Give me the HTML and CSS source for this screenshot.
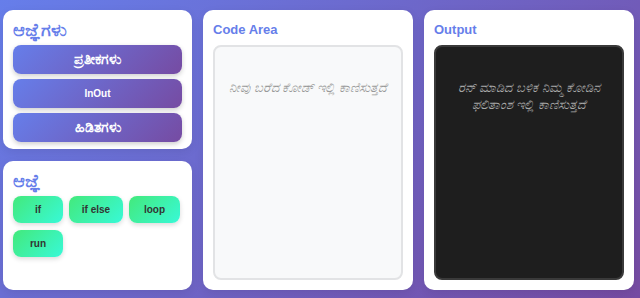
FILE: index.html
```html
<!DOCTYPE html>
<html lang="kn">
<head>
<meta charset="utf-8">
<link rel="stylesheet" href="styles.css">
</head>
<body>
<div class="app">
  <div class="sidebar">
    <section class="card card-cmds">
      <h2 class="card-title kn-title">ಆಜ್ಞೆಗಳು</h2>
      <div class="cat-list">
        <button class="cat-btn kn">ಪ್ರತೀಕಗಳು</button>
        <button class="cat-btn">InOut</button>
        <button class="cat-btn kn">ಹಿಡಿತಗಳು</button>
      </div>
    </section>
    <section class="card card-blocks">
      <h2 class="card-title kn-title">ಆಜ್ಞೆ</h2>
      <div class="block-list">
        <button class="block-btn">if</button>
        <button class="block-btn">if else</button>
        <button class="block-btn">loop</button>
        <button class="block-btn">run</button>
      </div>
    </section>
  </div>
  <section class="card panel">
    <h2 class="card-title">Code Area</h2>
    <div class="code-box">
      <p class="placeholder">ನೀವು ಬರೆದ ಕೋಡ್ ಇಲ್ಲಿ ಕಾಣಿಸುತ್ತದೆ</p>
    </div>
  </section>
  <section class="card panel">
    <h2 class="card-title">Output</h2>
    <div class="output-box">
      <p class="placeholder dark">ರನ್ ಮಾಡಿದ ಬಳಿಕ ನಿಮ್ಮ ಕೋಡಿನ ಫಲಿತಾಂಶ ಇಲ್ಲಿ ಕಾಣಿಸುತ್ತದೆ</p>
    </div>
  </section>
</div>
</body>
</html>
```
FILE: styles.css
```css
* { box-sizing: border-box; }
html, body { margin: 0; height: 100%; }
body {
  font-family: "Liberation Sans", "Noto Sans", sans-serif;
  background: linear-gradient(135deg, #667eea 0%, #764ba2 100%);
  overflow: hidden;
}
.app {
  display: grid;
  grid-template-columns: 189px 210px 210px;
  column-gap: 11px;
  padding: 10px 6px 8px 3px;
  height: 298px;
}
.sidebar {
  display: flex;
  flex-direction: column;
  gap: 12px;
}
.card {
  background: #fff;
  border-radius: 10px;
  padding: 10px;
  box-shadow: 0 3px 10px rgba(0,0,0,0.08);
}
.card-cmds { height: 139px; }
.card-blocks { flex: 1; }
.card-title {
  margin: 0 0 5px;
  height: 20px;
  font-size: 13px;
  font-weight: bold;
  color: #667eea;
  line-height: 20px;
  white-space: nowrap;
}
.kn-title { font-size: 18px; }
.cat-list { display: flex; flex-direction: column; gap: 5px; }
.cat-btn {
  height: 29px;
  border: none;
  border-radius: 8px;
  background: linear-gradient(135deg, #667eea 0%, #764ba2 100%);
  color: #fff;
  font-family: inherit;
  font-size: 10px;
  font-weight: bold;
  line-height: 29px;
  padding: 0;
  box-shadow: 0 2px 5px rgba(0,0,0,0.2);
}
.cat-btn.kn { font-size: 14px; }
.block-list {
  display: grid;
  grid-template-columns: 50px 54px 51px;
  gap: 7px 6px;
}
.block-btn {
  height: 27px;
  padding: 0;
  border: none;
  border-radius: 8px;
  background: linear-gradient(135deg, #43e97b 0%, #38f9d7 100%);
  color: #333;
  font-family: inherit;
  font-size: 10px;
  font-weight: bold;
  box-shadow: 0 2px 5px rgba(0,0,0,0.15);
}
.panel {
  display: flex;
  flex-direction: column;
}
.code-box, .output-box {
  flex: 1;
  border-radius: 8px;
  padding: 32px 10px 10px;
  text-align: center;
}
.code-box {
  background: #f8f9fa;
  border: 2px solid #e2e3e5;
}
.output-box {
  background: #1e1e1e;
  border: 2px solid #3a3a3a;
}
.placeholder {
  margin: 0;
  font-size: 13px;
  line-height: 17px;
  font-style: italic;
  color: #999;
}
.placeholder.dark { color: #a8a8a8; }
```
